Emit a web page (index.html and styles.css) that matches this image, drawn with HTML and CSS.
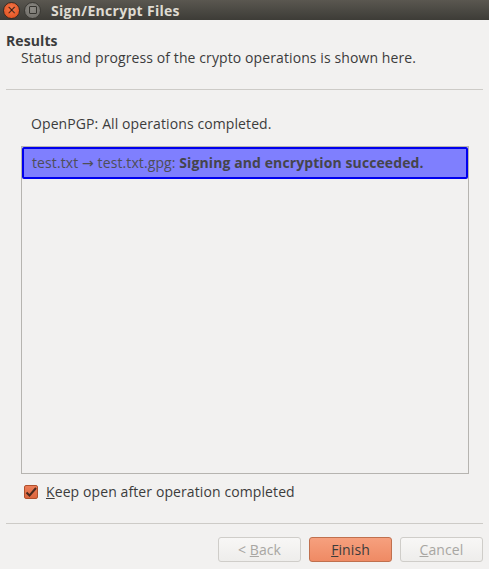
FILE: index.html
```html
<!DOCTYPE html>
<html>
<head>
<meta charset="utf-8">
<link rel="stylesheet" href="styles.css">
</head>
<body>
<div class="window">
  <div class="titlebar">
    <div class="wbtn close"><span>×</span></div>
    <div class="wbtn mini"><span class="sq"></span></div>
    <div class="title">Sign/Encrypt Files</div>
  </div>
  <div class="content">
    <div class="header">
      <div class="h-title">Results</div>
      <div class="h-sub">Status and progress of the crypto operations is shown here.</div>
    </div>
    <div class="sep"></div>
    <div class="page">
      <div class="status">OpenPGP: All operations completed.</div>
      <div class="list">
        <div class="item">test.txt → test.txt.gpg: <b>Signing and encryption succeeded.</b></div>
      </div>
      <label class="check">
        <span class="box"><svg width="12" height="12" viewBox="0 0 12 12"><path d="M1.5 6.5 L4.5 9.5 L11 2" fill="none" stroke="#4a2a1e" stroke-width="2"/></svg></span>
        <span><u>K</u>eep open after operation completed</span>
      </label>
    </div>
    <div class="sep sep2"></div>
    <div class="buttons">
      <div class="btn disabled"><span>&lt; <u>B</u>ack</span></div>
      <div class="btn primary"><span><u>F</u>inish</span></div>
      <div class="btn disabled"><span><u>C</u>ancel</span></div>
    </div>
  </div>
</div>
</body>
</html>
```

FILE: styles.css
```css
html, body {
  margin: 0;
  padding: 0;
  background: #f2f1f0;
}
body {
  font-family: "Open Sans", "DejaVu Sans", sans-serif;
  font-size: 14px;
  letter-spacing: 0.1px;
  color: #3c3c3c;
}
.window {
  width: 489px;
  height: 569px;
  display: flex;
  flex-direction: column;
  overflow: hidden;
}
.titlebar {
  height: 20px;
  background: linear-gradient(#5a5750, #3d3c37);
  display: flex;
  align-items: center;
  padding-left: 3px;
  flex-shrink: 0;
}
.wbtn {
  width: 15px;
  height: 15px;
  border-radius: 50%;
  display: flex;
  align-items: center;
  justify-content: center;
  margin-right: 4px;
}
.close {
  background: radial-gradient(circle at 50% 40%, #f47a4f, #df4a16);
  border: 1px solid #3a2a22;
  color: #3b1a0c;
  font-size: 12px;
  line-height: 1;
  font-family: "DejaVu Sans", sans-serif;
}
.close span { margin-top: -1px; }
.mini {
  background: radial-gradient(circle at 50% 40%, #8e8c86, #6a6863);
  border: 1px solid #3a3934;
}
.sq {
  width: 6px;
  height: 6px;
  border: 1px solid #35342f;
  border-radius: 1px;
}
.title {
  margin-left: 6px;
  color: #dfdbd2;
  font-weight: bold;
  font-size: 14px;
  letter-spacing: 0.3px;
}
.content {
  flex: 1;
  display: flex;
  flex-direction: column;
  padding: 0 6px;
}
.header {
  padding-top: 13px;
  height: 56px;
  box-sizing: border-box;
}
.h-title {
  font-weight: bold;
  line-height: 16px;
}
.h-sub {
  padding-left: 15px;
  line-height: 18px;
}
.sep {
  height: 1px;
  background: #cdcbc7;
  margin-top: 13px;
}
.page {
  padding: 0 14px 0 15px;
  display: flex;
  flex-direction: column;
}
.status {
  padding: 25px 0 0 10px;
  line-height: 18px;
}
.list {
  height: 326px;
  border: 1px solid #b6b4b0;
  background: #f2f1f0;
  margin-top: 13px;
}
.item {
  height: 32px;
  box-sizing: border-box;
  background: #7f7ffe;
  border: 2px solid #0000ee;
  border-radius: 2px;
  padding-left: 8px;
  line-height: 28px;
  color: #4e4e58;
  white-space: nowrap;
}
.item b { font-weight: bold; color: #45454c; }
.check {
  display: flex;
  align-items: center;
  margin-top: 9px;
  margin-left: 3px;
  line-height: 18px;
}
.box {
  width: 14px;
  height: 14px;
  box-sizing: border-box;
  border: 1px solid #b0502c;
  border-radius: 2px;
  background: linear-gradient(#ec7e58, #dc663e);
  display: flex;
  align-items: center;
  justify-content: center;
  margin-right: 8px;
}
.sep2 {
  margin-top: 22px;
}
.buttons {
  display: flex;
  justify-content: flex-end;
  gap: 8px;
  margin-top: 13px;
}
.btn {
  width: 83px;
  height: 25px;
  box-sizing: border-box;
  border: 1px solid #cfcdc9;
  border-radius: 3px;
  background: linear-gradient(#f8f7f6, #eeedeb);
  display: flex;
  align-items: center;
  justify-content: center;
}
.btn.disabled { color: #a8a6a2; }
.btn.primary {
  border-color: #c0704e;
  background: linear-gradient(#f6a07e, #ef8a64);
  color: #3c3c3c;
}
```
